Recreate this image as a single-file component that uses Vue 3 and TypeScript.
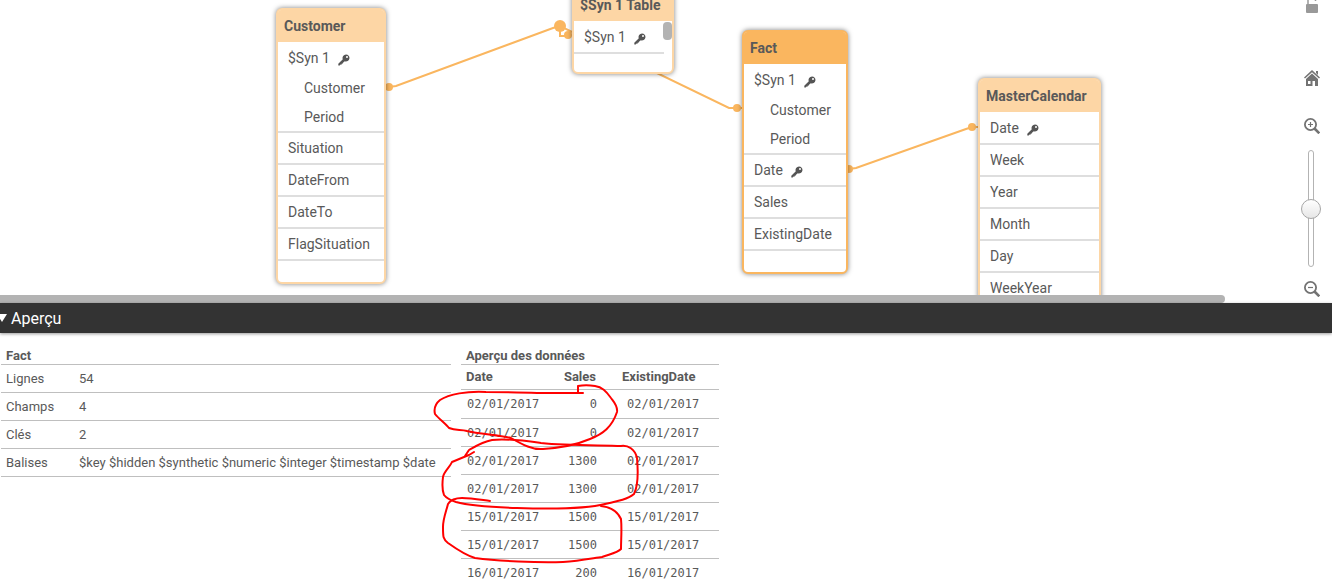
<script setup lang="ts">
import { ref } from 'vue'

interface Field {
  name: string
  key?: boolean
  parts?: string[]
}

interface TableNode {
  id: string
  title: string
  active?: boolean
  scroll?: boolean
  fields: Field[]
}

const nodes: TableNode[] = [
  {
    id: 'customer',
    title: 'Customer',
    fields: [
      { name: '$Syn 1', key: true, parts: ['Customer', 'Period'] },
      { name: 'Situation' },
      { name: 'DateFrom' },
      { name: 'DateTo' },
      { name: 'FlagSituation' },
    ],
  },
  { id: 'syn', title: '$Syn 1 Table', scroll: true, fields: [{ name: '$Syn 1', key: true }] },
  {
    id: 'fact',
    title: 'Fact',
    active: true,
    fields: [
      { name: '$Syn 1', key: true, parts: ['Customer', 'Period'] },
      { name: 'Date', key: true },
      { name: 'Sales' },
      { name: 'ExistingDate' },
    ],
  },
  {
    id: 'calendar',
    title: 'MasterCalendar',
    fields: [
      { name: 'Date', key: true },
      { name: 'Week' },
      { name: 'Year' },
      { name: 'Month' },
      { name: 'Day' },
      { name: 'WeekYear' },
    ],
  },
]

const summary = [
  { label: 'Lignes', value: '54' },
  { label: 'Champs', value: '4' },
  { label: 'Clés', value: '2' },
  { label: 'Balises', value: '$key $hidden $synthetic $numeric $integer $timestamp $date' },
]

const rows: [string, string, string][] = [
  ['02/01/2017', '0', '02/01/2017'],
  ['02/01/2017', '0', '02/01/2017'],
  ['02/01/2017', '1300', '02/01/2017'],
  ['02/01/2017', '1300', '02/01/2017'],
  ['15/01/2017', '1500', '15/01/2017'],
  ['15/01/2017', '1500', '15/01/2017'],
  ['16/01/2017', '200', '16/01/2017'],
]

const zoom = ref(50)
const open = ref(true)
</script>

<template>
  <div class="viewer">
    <main class="model">
      <svg class="links" width="1332" height="303" aria-hidden="true">
        <g fill="none" stroke="#fab65f" stroke-width="2">
          <path d="M389 87L396 86L553 28L560 26L729 108H742" />
          <path d="M560 26V36H568" />
          <path d="M849 169L856 168L966 129L972 127H978" />
        </g>
        <g fill="#fab65f">
          <circle cx="389" cy="87" r="4" />
          <circle cx="560" cy="26" r="6" />
          <circle cx="568" cy="35" r="4" />
          <circle cx="737" cy="108" r="4" />
          <circle cx="849" cy="169" r="4" />
          <circle cx="972" cy="127" r="4" />
        </g>
      </svg>

      <section
        v-for="node in nodes"
        :key="node.id"
        class="node"
        :class="[node.id, { active: node.active }]"
      >
        <h2>{{ node.title }}</h2>
        <ul :class="{ scrolling: node.scroll }">
          <li v-for="field in node.fields" :key="field.name">
            <div class="field">
              {{ field.name }}
              <svg v-if="field.key" class="key" viewBox="0 0 12 12" width="12" height="12" aria-hidden="true">
                <path
                  fill="#555"
                  fill-rule="evenodd"
                  d="M8 .5A3.500 3.500 0 1 1 6.800 7.300L5 8.700V9.500H3.800V10.500H2.600L1.700 11.400H.3V9.800L4.800 5.300A3.500 3.500 0 0 1 8 .5ZM9 2A1 1 0 1 0 9 4A1 1 0 1 0 9 2Z"
                />
              </svg>
            </div>
            <div v-for="part in field.parts" :key="part" class="field part">{{ part }}</div>
          </li>
        </ul>
        <span v-if="node.scroll" class="thumb"></span>
      </section>

      <div class="tools">
        <button type="button" class="lock" aria-label="Verrouiller">
          <svg viewBox="0 0 16 20" width="16" height="20">
            <rect x="2" y="9" width="12" height="9" rx="1" fill="#999" />
            <path d="M4 9V5a3.500 3.500 0 0 1 7.500-1V6" fill="none" stroke="#999" stroke-width="1.500" />
          </svg>
        </button>
        <button type="button" class="home" aria-label="Accueil">
          <svg viewBox="0 0 16 16" width="16" height="16" fill="#737373">
            <path d="M8 0L16 7.500L15 8.600L8 2.300L1 8.600L0 7.500Z" />
            <path d="M12 1H14V5L12 3Z" />
            <path fill-rule="evenodd" d="M8 3.500L14 9V16H11V11H8.500V16H2V9ZM4 11V14H6.500V11Z" />
          </svg>
        </button>
        <button type="button" class="zoom-in" aria-label="Zoom avant">
          <svg viewBox="0 0 16 16" width="16" height="16" fill="none" stroke="#737373">
            <circle cx="6.500" cy="6.500" r="5.600" stroke-width="1.800" />
            <path d="M6.500 4V9M4 6.500H9" stroke-width="1.200" />
            <path d="M10.500 10.500L15.300 15.300" stroke-width="2.600" />
          </svg>
        </button>
        <input v-model.number="zoom" type="range" min="0" max="100" aria-label="Zoom" />
        <button type="button" class="zoom-out" aria-label="Zoom arrière">
          <svg viewBox="0 0 16 16" width="16" height="16" fill="none" stroke="#737373">
            <circle cx="6.500" cy="6.500" r="5.600" stroke-width="1.800" />
            <path d="M4 6.500H9" stroke-width="1.200" />
            <path d="M10.500 10.500L15.300 15.300" stroke-width="2.600" />
          </svg>
        </button>
      </div>
      <div class="hscroll"></div>
    </main>

    <button type="button" class="bar" :aria-expanded="open" @click="open = !open">
      <svg viewBox="0 0 8 8" width="8" height="8" aria-hidden="true"><path d="M-3 0H7L2 8Z" fill="#fff" /></svg>
      <span>Aperçu</span>
    </button>

    <section v-if="open" class="preview">
      <table class="summary">
        <caption>Fact</caption>
        <tbody>
          <tr v-for="item in summary" :key="item.label">
            <th scope="row">{{ item.label }}</th>
            <td>{{ item.value }}</td>
          </tr>
        </tbody>
      </table>

      <table class="data">
        <caption>Aperçu des données</caption>
        <thead>
          <tr>
            <th scope="col">Date</th>
            <th scope="col">Sales</th>
            <th scope="col">ExistingDate</th>
          </tr>
        </thead>
        <tbody>
          <tr v-for="(row, i) in rows" :key="i">
            <td v-for="(cell, c) in row" :key="c">{{ cell }}</td>
          </tr>
        </tbody>
      </table>

      <svg class="marks" viewBox="430 333 300 252" width="300" height="252" aria-hidden="true">
        <g fill="none" stroke="#f00" stroke-width="2" stroke-linecap="round" stroke-linejoin="round">
          <path d="M583 393H537C520 392 503 392 486 392C467 391 449 394 440 400C434 405 434 410 435 414C439 419 445 423 449 428C456 431 461 429 467 431C479 434 498 435 511 438C523 445 533 450 543 449C558 448 576 445 590 439C603 434 612 427 617 412C618 406 614 402 611 398C606 391 602 387 595 386C588 385 584 385 578 386V392" />
          <path d="M474 452L469 455L464 457L452 462C450 467 444 471 443 477C442 485 442 490 444 495C447 499 453 501 456 502C467 505 487 507 517 508C549 509 586 509 605 504C619 501 628 499 634 494C639 484 638 469 637 458C635 449 628 445 621 446C604 445 570 446 541 443C527 441 507 438 492 440C482 442 476 446 469 450L465 456" />
          <path d="M490 501C482 500 472 498 462 498C455 498 450 501 448 504C446 512 443 519 443 527C443 537 443 539 448 543C455 548 465 555 475 558C498 561 538 563 563 562C580 561 594 558 602 557C610 554 617 553 621 549C621 539 622 529 621 519C617 510 610 507 601 506" />
        </g>
      </svg>
    </section>
  </div>
</template>

<style>
body {
  margin: 0;
  overflow: hidden;
}
</style>

<style scoped>
.viewer {
  display: flex;
  flex-direction: column;
  height: 100vh;
  overflow: hidden;
  background: #fff;
  color: #595959;
  font-family: Roboto, 'Noto Sans', sans-serif;
  font-size: 13px;
}

button {
  margin: 0;
  padding: 0;
  border: 0;
  background: none;
  font: inherit;
  cursor: pointer;
}

svg {
  display: block;
}

.model {
  position: relative;
  flex: none;
  height: 303px;
  overflow: hidden;
}

.links {
  position: absolute;
  top: 0;
  left: 0;
}

.node {
  position: absolute;
  box-sizing: border-box;
  padding-bottom: 21px;
  border: 2px solid #fdd6a5;
  border-radius: 6px;
  background: #fff;
  box-shadow: 0 0 5px rgba(0, 0, 0, 0.5);
  font-size: 14px;
}

.node.active {
  border-color: #fab65f;
}

.customer {
  top: 8px;
  left: 276px;
  width: 110px;
}

.syn {
  top: -13px;
  left: 572px;
  width: 102px;
  padding-bottom: 18px;
}

.fact {
  top: 30px;
  left: 742px;
  width: 106px;
}

.calendar {
  top: 78px;
  left: 978px;
  width: 123px;
}

.node h2 {
  margin: 0;
  padding-left: 6px;
  border-radius: 3px 3px 0 0;
  background: #fdd6a5;
  font-size: 14px;
  font-weight: 700;
  line-height: 32px;
  white-space: nowrap;
}

.node.active h2 {
  background: #fab65f;
}

.node ul {
  margin: 0;
  padding: 1px 0 0;
  list-style: none;
}

.node ul.scrolling {
  margin-right: 8px;
}

.node li {
  border-bottom: 2px solid #dedede;
}

.field {
  display: flex;
  align-items: center;
  gap: 8px;
  height: 30px;
  padding-left: 10px;
  white-space: nowrap;
}

.field.part {
  height: 29px;
  padding-left: 26px;
}

.key {
  margin-top: 3px;
}

.thumb {
  position: absolute;
  top: 33px;
  right: 0;
  width: 9px;
  height: 18px;
  border-radius: 4px;
  background: #b3b3b3;
}

.tools {
  position: absolute;
  top: -5px;
  right: 9px;
  display: flex;
  flex-direction: column;
  align-items: center;
  width: 22px;
}

.home {
  margin-top: 55px;
}

.zoom-in {
  margin-top: 32px;
}

.zoom-out {
  margin-top: 14px;
}

.tools input {
  appearance: none;
  writing-mode: vertical-lr;
  box-sizing: border-box;
  width: 20px;
  height: 117px;
  margin: 16px 2px 0 0;
  background: none;
}

.tools input::-webkit-slider-runnable-track {
  box-sizing: border-box;
  width: 6px;
  height: 117px;
  border: 1px solid #b3b3b3;
  border-radius: 3px;
  background: #fff;
}

.tools input::-webkit-slider-thumb {
  appearance: none;
  box-sizing: border-box;
  width: 20px;
  height: 20px;
  margin-left: -8px;
  border: 1px solid #a6a6a6;
  border-radius: 50%;
  background: linear-gradient(#fff, #e6e6e6);
}

.hscroll {
  position: absolute;
  bottom: 0;
  left: 0;
  width: 92%;
  height: 8px;
  border-radius: 0 4px 4px 0;
  background: #b3b3b3;
}

.bar {
  position: relative;
  display: flex;
  flex: none;
  align-items: center;
  gap: 3px;
  height: 30px;
  background: #333;
  box-shadow: 0 1px 3px rgba(0, 0, 0, 0.4);
  color: #fff;
  font-size: 16px;
}

.preview {
  position: relative;
  display: flex;
  flex: 1;
  align-items: flex-start;
  gap: 10px;
  min-height: 0;
  padding: 14px 0 0 1px;
  overflow: hidden;
}

table {
  flex: none;
  border-collapse: collapse;
}

caption {
  padding-left: 5px;
  border-bottom: 1px solid #bfbfbf;
  font-weight: 700;
  line-height: 17px;
  text-align: left;
}

th,
td {
  height: 27px;
  padding: 0 5px;
  border-bottom: 1px solid #bfbfbf;
  text-align: left;
  white-space: nowrap;
}

.summary {
  width: 450px;
}

.summary th {
  width: 63px;
  font-weight: 400;
}

.data {
  width: 258px;
}

.data th {
  height: 22px;
  padding-bottom: 2px;
}

.data td {
  padding-right: 4px;
  padding-left: 6px;
  font-family: 'DejaVu Sans Mono', monospace;
  font-size: 12px;
  line-height: 16px;
}

.data tbody tr:first-child td {
  height: 28px;
}

.data th:nth-child(2),
.data td:nth-child(2) {
  text-align: right;
}

.data th:nth-child(3) {
  width: 92px;
  padding-left: 21px;
}

.data td:nth-child(3) {
  padding-left: 26px;
}

.marks {
  position: absolute;
  top: 0;
  left: 430px;
}
</style>
